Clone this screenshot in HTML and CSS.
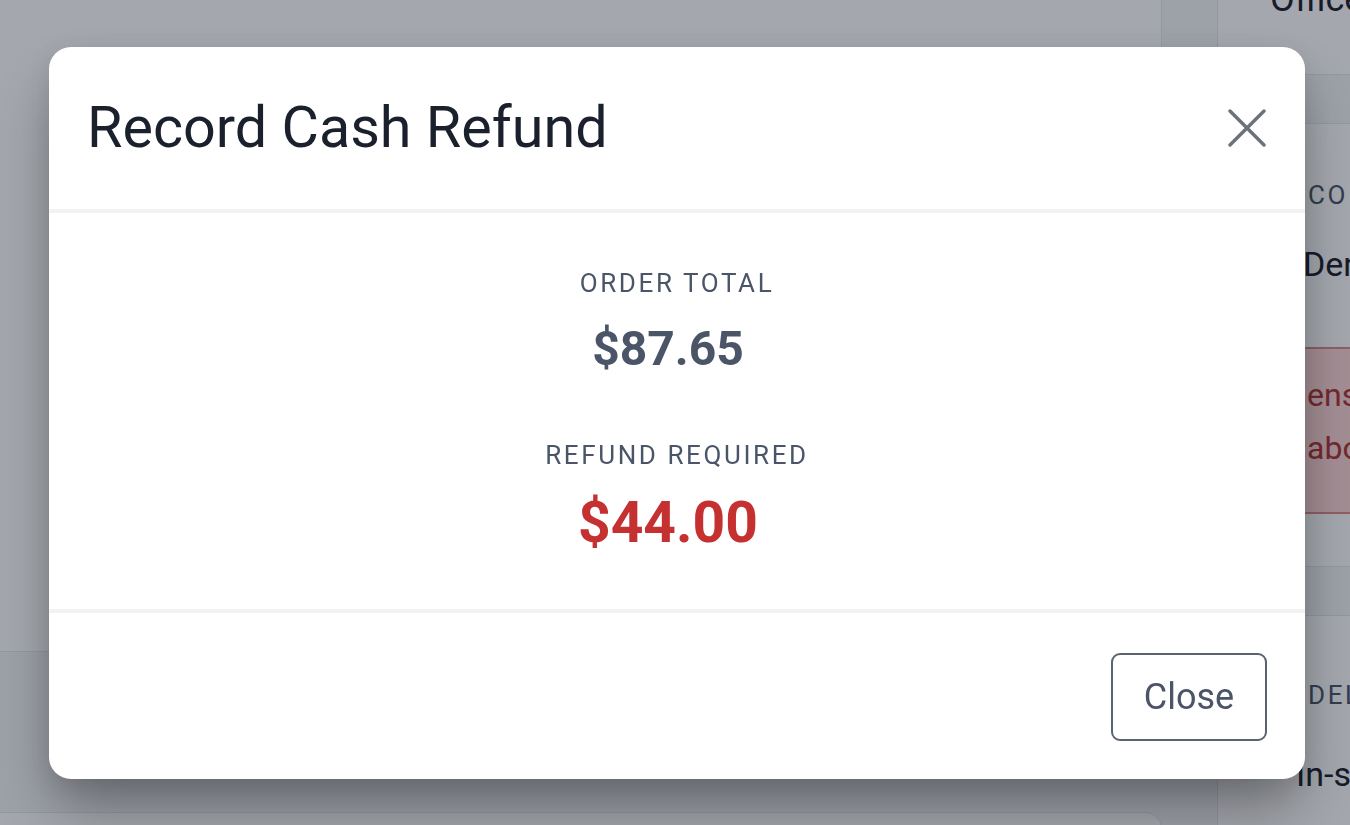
FILE: index.html
```html
<!DOCTYPE html>
<html lang="en">
<head>
<meta charset="utf-8">
<title>Record Cash Refund</title>
<link rel="stylesheet" href="styles.css">
</head>
<body>
<div class="page">
  <main class="main">
    <section class="card card-main"></section>
    <section class="card card-bottom"></section>
  </main>
  <aside class="side">
    <section class="scard scard-a"><div class="side-big office">Office</div></section>
    <section class="scard scard-b">
      <div class="side-label">CO</div>
      <div class="side-big name">Den</div>
      <div class="alert">
        <div class="alert-line">ens</div>
        <div class="alert-line">abo</div>
      </div>
    </section>
    <section class="scard scard-c">
      <div class="side-label">DEL</div>
      <div class="side-big instore">In-s</div>
    </section>
  </aside>
</div>

<div class="overlay">
  <div class="modal" role="dialog" aria-labelledby="modal-title">
    <header class="modal-header">
      <h2 class="modal-title" id="modal-title">Record Cash Refund</h2>
      <button class="icon-btn" type="button" aria-label="Close">
        <svg width="40" height="40" viewBox="0 0 40 40" aria-hidden="true">
          <path d="M3 3L37 37M37 3L3 37" fill="none" stroke="#6c727c" stroke-width="3.4" stroke-linecap="round"/>
        </svg>
      </button>
    </header>
    <div class="modal-body">
      <div class="stat">
        <div class="stat-label">ORDER TOTAL</div>
        <div class="stat-value">$87.65</div>
      </div>
      <div class="stat stat-refund">
        <div class="stat-label">REFUND REQUIRED</div>
        <div class="stat-value refund">$44.00</div>
      </div>
    </div>
    <footer class="modal-footer">
      <button class="btn-close" type="button">Close</button>
    </footer>
  </div>
</div>
</body>
</html>
```

FILE: styles.css
```css
html, body {
  margin: 0;
  padding: 0;
  overflow: hidden;
  height: 100%;
}

body {
  font-family: Roboto, "Liberation Sans", Arial, sans-serif;
  background: #f4f5f7;
  color: #1a202c;
}

/* background page (behind overlay) */
.page {
  display: flex;
  gap: 55px;
  margin-top: -80px;
  margin-left: -30px;
}

.main {
  width: 1192px;
  flex: none;
  display: flex;
  flex-direction: column;
  gap: 160px;
}

.card {
  background: #ffffff;
  border: 1px solid #e4e7eb;
  border-radius: 16px;
}

.card-main {
  height: 730px;
}

.card-bottom {
  height: 300px;
}

.side {
  width: 200px;
  flex: none;
  display: flex;
  flex-direction: column;
  gap: 48px;
}

.scard {
  background: #ffffff;
  border: 1px solid #e4e7eb;
  border-right: none;
  border-radius: 16px 0 0 16px;
  padding-left: 78px;
  overflow: hidden;
}

.scard-a {
  height: 155px;
  box-sizing: border-box;
  display: flex;
  align-items: flex-end;
  padding-bottom: 48px;
  padding-left: 52px;
}

.side-big {
  font-size: 36px;
  line-height: 54px;
  color: #1a202c;
  white-space: nowrap;
}

.side-label {
  font-size: 26px;
  line-height: 39px;
  letter-spacing: 2.6px;
  color: #4a5568;
  white-space: nowrap;
  padding-left: 12px;
}

.scard-b {
  height: 444px;
  box-sizing: border-box;
  padding-top: 52px;
}

.name {
  font-size: 34px;
  line-height: 51px;
  margin-top: 24px;
  padding-left: 7px;
}

.alert {
  margin-top: 57px;
  height: 167px;
  box-sizing: border-box;
  background: #fed7d7;
  border: 2px solid #e08a8a;
  border-right: none;
  border-radius: 10px 0 0 10px;
  padding: 20px 0 0 9px;
}

.alert-line {
  font-size: 32px;
  line-height: 53px;
  color: #b03434;
  white-space: nowrap;
}

.scard-c {
  height: 400px;
  box-sizing: border-box;
  padding-top: 60px;
}

.instore {
  font-size: 34px;
  line-height: 51px;
  margin-top: 34px;
}

/* overlay + modal */
.overlay {
  position: fixed;
  inset: 0;
  background: rgba(17, 24, 39, 0.38);
  display: flex;
  align-items: center;
  justify-content: center;
}

.modal {
  width: 1256px;
  background: #ffffff;
  border-radius: 22px;
  box-shadow: 0 36px 60px -6px rgba(0, 0, 0, 0.32), 0 8px 24px rgba(0, 0, 0, 0.1);
  overflow: hidden;
  transform: translateX(2px);
}

.modal-header {
  height: 166px;
  box-sizing: border-box;
  padding: 0 38px 0 38px;
  display: flex;
  align-items: center;
  justify-content: space-between;
  border-bottom: 4px solid #f2f2f3;
}

.modal-title {
  margin: 0;
  font-size: 57.5px;
  font-weight: 400;
  color: #1a202c;
  line-height: 1.2;
}

.icon-btn {
  border: none;
  background: none;
  padding: 0;
  width: 40px;
  height: 40px;
  display: flex;
  cursor: pointer;
}

.modal-body {
  padding: 51px 38px 50px;
  text-align: center;
}

.stat-label {
  font-size: 26px;
  line-height: 39px;
  letter-spacing: 2.6px;
  color: #4a5568;
}

.stat-value {
  margin-top: 16px;
  padding-right: 18px;
  font-size: 48px;
  line-height: 60px;
  font-weight: 700;
  color: #4a5568;
}

.stat-refund {
  margin-top: 57px;
}

.stat-refund .stat-value {
  margin-top: 12px;
}

.stat-value.refund {
  font-size: 57px;
  line-height: 72px;
  color: #c53030;
}

.modal-footer {
  border-top: 4px solid #f2f2f3;
  padding: 40px 38px 38px;
  display: flex;
  justify-content: flex-end;
}

.btn-close {
  width: 156px;
  height: 88px;
  background: #ffffff;
  border: 2px solid #5c6370;
  border-radius: 9px;
  font-family: Roboto, "Liberation Sans", Arial, sans-serif;
  font-size: 36px;
  color: #4a5568;
  cursor: pointer;
}
```
